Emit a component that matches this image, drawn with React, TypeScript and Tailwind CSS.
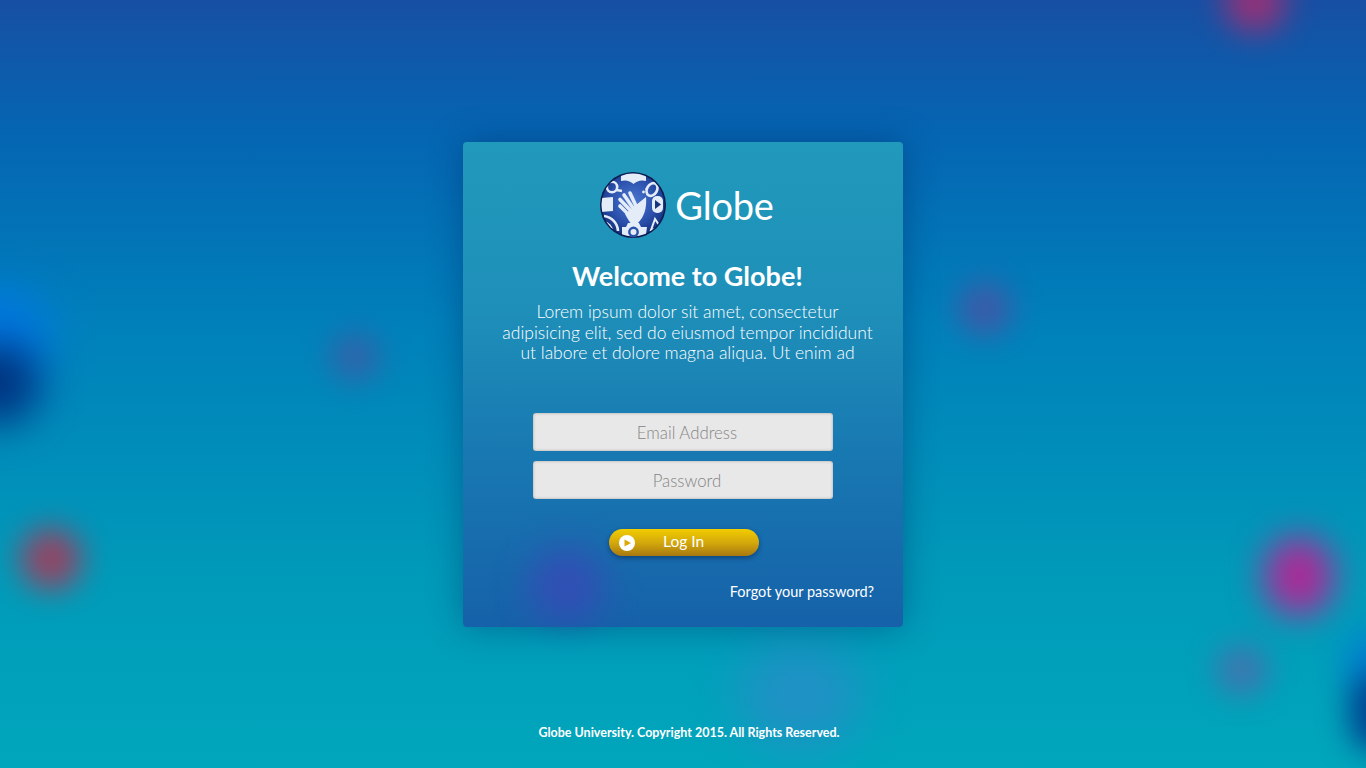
const blobs = [
  { c: "left-[1224px] top-[-28px] w-[62px] h-[60px] bg-[#b82a6c] blur-[16px]", o: 0.8 },
  { c: "left-[958px] top-[282px] w-[54px] h-[54px] bg-[#5a4aa0] blur-[15px]", o: 0.7 },
  { c: "left-[330px] top-[332px] w-[50px] h-[50px] bg-[#5a4a9c] blur-[15px]", o: 0.55 },
  { c: "left-[-56px] top-[290px] w-[106px] h-[96px] bg-[#0078ea] blur-[24px]", o: 0.9 },
  { c: "left-[-46px] top-[342px] w-[86px] h-[82px] bg-[#00337f] blur-[20px]", o: 1 },
  { c: "left-[20px] top-[528px] w-[62px] h-[62px] bg-[#b83050] blur-[15px]", o: 0.8 },
  { c: "left-[1264px] top-[536px] w-[70px] h-[80px] bg-[#a82c98] blur-[17px]", o: 1 },
  { c: "left-[1216px] top-[644px] w-[52px] h-[52px] bg-[#6a5aa8] blur-[15px]", o: 0.6 },
  { c: "left-[1346px] top-[630px] w-[66px] h-[66px] bg-[#0078d8] blur-[18px]", o: 0.9 },
  { c: "left-[1350px] top-[672px] w-[56px] h-[80px] bg-[#00408f] blur-[15px]", o: 1 },
  { c: "left-[534px] top-[550px] w-[68px] h-[68px] bg-[#3a48b8] blur-[18px]", o: 0.85 },
  { c: "left-[738px] top-[644px] w-[124px] h-[104px] bg-[#2a8cc8] blur-[24px]", o: 0.75 },
];

function GlobeLogo() {
  return (
    <svg width="66" height="66" viewBox="0 0 66 66" className="shrink-0">
      <defs>
        <radialGradient id="g" cx="50%" cy="44%" r="56%">
          <stop offset="0%" stopColor="#4a78d0" />
          <stop offset="65%" stopColor="#2b50ab" />
          <stop offset="100%" stopColor="#14327e" />
        </radialGradient>
        <clipPath id="c"><circle cx="33" cy="33" r="31.5" /></clipPath>
      </defs>
      <circle cx="33" cy="33" r="33" fill="#0c1c50" />
      <circle cx="33" cy="33" r="31.5" fill="url(#g)" />
      <g clipPath="url(#c)" fill="#e4ecf8">
        <path d="M21 0 H46 L46 9 Q39 7 33.5 12 Q28 7 21 9 Z" />
        <path d="M0 26 L13 25 V39 L0 40 Z" />
        <path d="M22 55 H26 L28 51 H39 L41 55 H47 L45 70 H22 Z" />
        <path d="M25 42 L36 33 L46 25 C47 36 44 45 38 51 L32 53 C29 49 27 46 25 42 Z" />
      </g>
      <g fill="none" stroke="#e4ecf8" strokeWidth="3.6" strokeLinecap="round">
        <path d="M28 42 L20 34" />
        <path d="M30 38 L20 27.5" />
        <path d="M33 36 L24 23" />
        <path d="M36 34 L30 21" />
      </g>
      <g fill="none" stroke="#e4ecf8" strokeWidth="2.6" clipPath="url(#c)">
        <circle cx="12" cy="15" r="5.2" />
        <path d="M16.5 18 L22 19" />
        <ellipse cx="52" cy="17.5" rx="5" ry="6.8" transform="rotate(30 52 17.5)" />
        <path d="M4 44 A16 16 0 0 1 18 59" />
        <path d="M3 50 A10 10 0 0 1 12 60" />
        <path d="M51 58 L55 47 L61 56 Z" strokeWidth="2" />
      </g>
      <circle cx="33.5" cy="60" r="4.2" fill="none" stroke="#2b50ab" strokeWidth="2.4" />
      <circle cx="43.5" cy="20" r="1.4" fill="#e4ecf8" />
      <circle cx="46.5" cy="17" r="1.2" fill="#e4ecf8" />
      <rect x="52" y="24" width="11" height="17" rx="5" fill="#e4ecf8" />
      <path d="M55 28 L61 32.5 L55 37 Z" fill="#17367f" />
    </svg>
  );
}

export default function App() {
  return (
    <div className="relative w-full h-[768px] overflow-hidden bg-[linear-gradient(180deg,#174fa3_0%,#0565b2_17%,#0080ba_42%,#009ab9_75%,#00a6bb_100%)] font-['Lato','Noto_Sans',sans-serif] text-white">
      {blobs.map((b, i) => (
        <div key={i} className={`absolute rounded-full ${b.c}`} style={{ opacity: b.o }} />
      ))}
      <div className="relative flex flex-col items-center pt-[142px]">
        <div className="relative w-[440px] h-[485px] rounded-[4px] overflow-hidden shadow-[0_0_34px_rgba(0,30,90,0.38)] bg-[linear-gradient(180deg,#2199bb_0%,#1e8fb9_35%,#1878b1_65%,#1661a9_100%)] flex flex-col items-center">
          <div className="absolute left-[66px] top-[406px] w-[74px] h-[74px] rounded-full bg-[#3a48b8] blur-[18px] opacity-80" />
          <div className="relative mt-[30px] ml-[8px] flex items-center gap-[9px]">
            <GlobeLogo />
            <span className="text-[38px] leading-[66px] font-normal tracking-[-0.2px]">Globe</span>
          </div>
          <h1 className="relative mt-[20px] ml-[9px] text-[27px] leading-[36px] font-bold">Welcome to Globe!</h1>
          <p className="relative mt-[8px] ml-[9px] w-[400px] text-center text-[17.5px] leading-[20.5px] font-light text-white">
            Lorem ipsum dolor sit amet, consectetur<br />
            adipisicing elit, sed do eiusmod tempor incididunt<br />
            ut labore et dolore magna aliqua. Ut enim ad
          </p>
          <div className="relative mt-[49px] flex flex-col gap-[10px]">
            <div className="w-[300px] h-[38px] rounded-[3px] bg-[#e8e8e8] shadow-[inset_0_0_3px_rgba(0,0,0,0.3)] flex items-center justify-center pl-[8px] pt-[2px] text-[16.8px] font-light text-[#858585]">Email Address</div>
            <div className="w-[300px] h-[38px] rounded-[3px] bg-[#e8e8e8] shadow-[inset_0_0_3px_rgba(0,0,0,0.3)] flex items-center justify-center pl-[8px] pt-[2px] text-[16.8px] font-light text-[#858585]">Password</div>
          </div>
          <div className="relative mt-[30px] ml-[2px] w-[150px] h-[27px] rounded-full bg-[linear-gradient(180deg,#f2cd00_0%,#d4a90c_50%,#a87810_100%)] shadow-[0_2px_5px_rgba(0,20,60,0.45)] flex items-center">
            <svg width="16" height="16" viewBox="0 0 16 16" className="ml-[10px] mt-[1px]">
              <circle cx="8" cy="8" r="8" fill="#fff" />
              <path d="M5.5 4.5 L12 8 L5.5 11.5 Z" fill="#d9a90a" />
            </svg>
            <span className="ml-[28px] text-[15.5px] leading-[24px] mb-[3px]">Log In</span>
          </div>
          <div className="relative mt-[26px] self-end mr-[29px] text-[14.5px] leading-[20px]">Forgot your password?</div>
        </div>
        <footer className="mt-[97px] ml-[12px] text-[12.5px] leading-[18px] font-bold">Globe University. Copyright 2015. All Rights Reserved.</footer>
      </div>
    </div>
  );
}
